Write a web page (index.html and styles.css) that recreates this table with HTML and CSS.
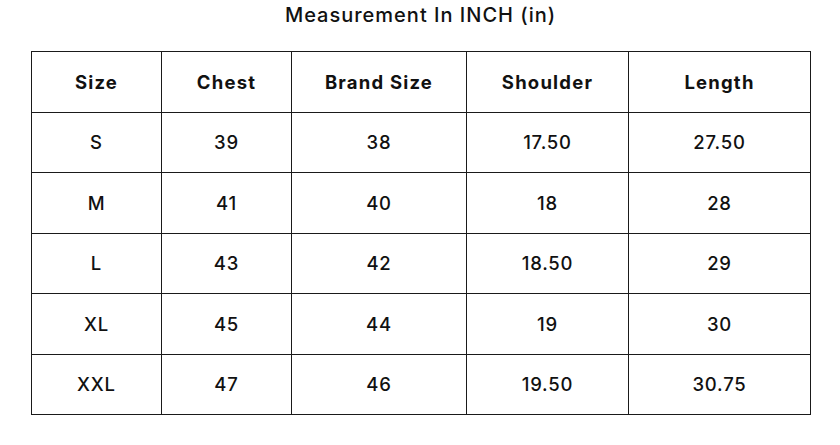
FILE: index.html
```html
<!DOCTYPE html>
<html>
<head>
<meta charset="utf-8">
<link rel="stylesheet" href="styles.css">
</head>
<body>
<div class="page">
  <h1 class="title">Measurement In INCH (in)</h1>
  <table class="chart">
    <colgroup>
      <col class="c1"><col class="c2"><col class="c3"><col class="c4"><col class="c5">
    </colgroup>
    <thead>
      <tr><th>Size</th><th>Chest</th><th>Brand Size</th><th>Shoulder</th><th>Length</th></tr>
    </thead>
    <tbody>
      <tr><td>S</td><td>39</td><td>38</td><td>17.50</td><td>27.50</td></tr>
      <tr><td>M</td><td>41</td><td>40</td><td>18</td><td>28</td></tr>
      <tr><td>L</td><td>43</td><td>42</td><td>18.50</td><td>29</td></tr>
      <tr><td>XL</td><td>45</td><td>44</td><td>19</td><td>30</td></tr>
      <tr><td>XXL</td><td>47</td><td>46</td><td>19.50</td><td>30.75</td></tr>
    </tbody>
  </table>
</div>
</body>
</html>
```
FILE: styles.css
```css
html, body {
  margin: 0;
  padding: 0;
  background: #fff;
}
.page {
  padding: 0 30px 0 31px;
  font-family: Inter, "Open Sans", sans-serif;
  color: #111;
}
.title {
  margin: 0 0 21px 0;
  height: 30px;
  line-height: 30px;
  text-align: center;
  font-size: 20px;
  font-weight: 500;
  letter-spacing: 1px;
}
.chart {
  border-collapse: collapse;
  table-layout: fixed;
  width: 779px;
}
.c1 { width: 130px; }
.c2 { width: 130px; }
.c3 { width: 175px; }
.c4 { width: 162px; }
.c5 { width: 182px; }
.chart th, .chart td {
  border: 1px solid #1a1a1a;
  text-align: center;
  vertical-align: middle;
  padding: 0;
  font-size: 18.5px;
  height: 59.5px;
}
.chart th {
  font-weight: 700;
  letter-spacing: 1.2px;
}
.chart td {
  font-weight: 500;
  letter-spacing: 0.8px;
}
```
